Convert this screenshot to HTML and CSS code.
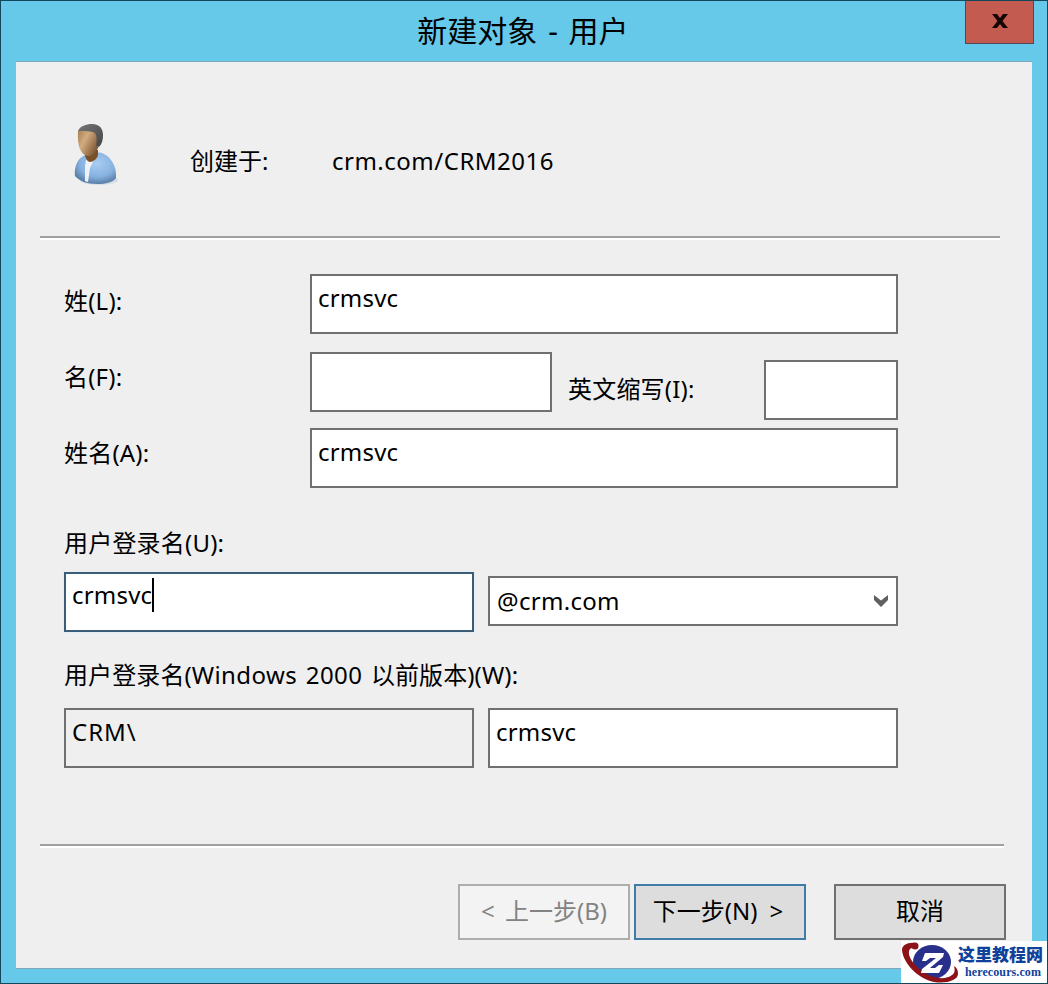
FILE: index.html
```html
<!DOCTYPE html>
<html lang="zh-CN">
<head>
    <meta charset="UTF-8">
    <meta name="viewport" content="width=device-width, initial-scale=1.0">
    <title>新建对象 - 用户</title>
    <link rel="stylesheet" href="styles.css">
</head>
<body>
    <div class="window">
        <div class="titlebar">
            <h1>新建对象 - 用户</h1>
            <button type="button" class="close-btn" aria-label="关闭">
                <svg width="16" height="14" viewBox="0 0 16 14">
                    <path d="M0 0h5l3 4 3-4h5l-5.500 7 5.500 7h-5l-3-4-3 4H0l5.500-7z" fill="#140606"/>
                </svg>
            </button>
        </div>

        <form class="panel">
            <div class="summary">
                <svg class="user-icon" width="48" height="66" viewBox="0 0 48 66">
                    <defs>
                        <linearGradient id="skin" x1="0" y1="0" x2="1" y2="0.600">
                            <stop offset="0" stop-color="#a98058"/>
                            <stop offset="0.400" stop-color="#d2ab80"/>
                            <stop offset="1" stop-color="#7a5430"/>
                        </linearGradient>
                        <linearGradient id="hair" x1="0" y1="0" x2="1" y2="1">
                            <stop offset="0" stop-color="#777"/>
                            <stop offset="1" stop-color="#444"/>
                        </linearGradient>
                        <radialGradient id="shirt" cx="0.550" cy="0.350" r="0.650">
                            <stop offset="0" stop-color="#a9cdf2"/>
                            <stop offset="0.650" stop-color="#86b1df"/>
                            <stop offset="1" stop-color="#5b7fa8"/>
                        </radialGradient>
                    </defs>
                    <ellipse cx="27" cy="58" rx="19" ry="5" fill="#d3dde6"/>
                    <path d="M10 35C5 38 2 46 3 54c4 5 12 8 22 8 9 0 16-2 19-6 1-10-4-20-12-24-5-3-17-1-22 3z" fill="url(#shirt)"/>
                    <path d="M14 38h8l-4 8-2 14-3-1V44z" fill="#eef2f7"/>
                    <path d="M13 28h13v5c-1 4-5 7-8 7-2 0-4-3-5-6z" fill="#7a5026"/>
                    <path d="M6 9h21v14c-2 7-6 11-11 11C9 33 5 25 6 9z" fill="url(#skin)"/>
                    <path d="M6 9C8 4 14 2 20 2c8 0 11 5 11 11 0 5-1 9-4 12l-3-2c1-5 1-9-1-12-4-2-11-2-17-2z" fill="url(#hair)"/>
                </svg>
                <span class="created-in">创建于:</span>
                <span class="path">crm.com/CRM2016</span>
            </div>

            <hr class="rule">

            <div class="fields">
                <div class="row">
                    <label for="lastName">姓(L):</label>
                    <input type="text" id="lastName" value="crmsvc">
                </div>
                <div class="row row-first">
                    <label for="firstName">名(F):</label>
                    <input type="text" id="firstName" class="first-name">
                    <label for="initials" class="initials-label">英文缩写(I):</label>
                    <input type="text" id="initials" class="initials">
                </div>
                <div class="row row-full">
                    <label for="fullName">姓名(A):</label>
                    <input type="text" id="fullName" value="crmsvc">
                </div>

                <label for="logonName" class="logon-label">用户登录名(U):</label>
                <div class="pair">
                    <div class="active-field">
                        <input type="text" id="logonName" value="crmsvc">
                        <span class="caret"></span>
                    </div>
                    <div class="combo">
                        <span>@crm.com</span>
                        <svg width="14" height="12" viewBox="0 0 14 12">
                            <path d="M0 0l7 5.500L14 0v5l-7 7-7-7z" fill="#606060"/>
                        </svg>
                    </div>
                </div>

                <label for="oldLogonName" class="old-label">用户登录名(<span class="wide">Windows 2000 </span>以前版本)(W):</label>
                <div class="pair">
                    <input type="text" class="domain" value="CRM\" readonly>
                    <input type="text" id="oldLogonName" value="crmsvc">
                </div>
            </div>

            <hr class="rule rule-bottom">

            <div class="buttons">
                <button type="button" disabled>&lt; 上一步(B)</button>
                <button type="button" class="next">下一步(N) &gt;</button>
                <button type="button" class="cancel">取消</button>
            </div>
        </form>

        <div class="watermark">
            <svg width="58" height="42" viewBox="0 0 58 42">
                <ellipse cx="31" cy="21" rx="19" ry="17" fill="#29308c"/>
                <path d="M14 2C7 1 1 4 1 9c1 13 16 29 32 32 13 2 24-2 24-8 0-4-1-6-4-8 1 4 1 7-2 9-5 4-13 4-21 1C18 30 7 18 8 11c0-3 2-4 6-5z" fill="#8c1418"/>
                <circle cx="14" cy="5" r="3.500" fill="#8c1418"/>
                <path d="M24 12h19l-1 4-13 11h5l4-3h4l-4 8H20l1-4 14-11h-6l-4 3h-4z" fill="#fff"/>
            </svg>
            <div class="watermark-text">
                <strong>这里教程网</strong>
                <span>herecours.com</span>
            </div>
        </div>
    </div>
</body>
</html>
```
FILE: styles.css
```css
* {
    box-sizing: border-box;
}

body {
    margin: 0;
    font-family: "Noto Sans", "Noto Sans CJK SC", sans-serif;
    font-size: 24px;
    line-height: 32px;
    color: #000;
}

.window {
    position: relative;
    width: 1048px;
    height: 984px;
    padding: 0 15px 15px;
    border: 1px solid #12475c;
    background-color: #66c9ea;
    overflow: hidden;
}

.titlebar {
    position: relative;
    display: flex;
    justify-content: center;
    height: 60px;
}

.titlebar h1 {
    margin: 0;
    padding: 9px 2px 0 0;
    font-size: 30px;
    font-weight: 400;
    line-height: 42px;
    word-spacing: 3px;
}

.close-btn {
    position: absolute;
    top: -1px;
    right: -2px;
    display: flex;
    justify-content: center;
    align-items: center;
    width: 69px;
    height: 44px;
    padding: 0 0 2px;
    border: 1px solid #54465a;
    background-color: #c35b50;
}

.panel {
    height: 908px;
    border-top: 1px solid #7aa6bd;
    border-bottom: 1px solid #7fa9b8;
    background-color: #efefef;
}

.summary {
    display: flex;
    height: 174px;
    padding-left: 56px;
}

.user-icon {
    margin-top: 60px;
}

.created-in {
    width: 142px;
    margin: 83px 0 0 70px;
}

.path {
    margin-top: 83px;
    letter-spacing: 0.5px;
}

.rule {
    height: 4px;
    margin: 0 32px 0 24px;
    border: 0;
    border-top: 2px solid #a0a0a0;
    background-color: #fff;
}

.rule-bottom {
    margin-right: 28px;
}

.fields {
    height: 604px;
    width: 882px;
    padding: 34px 0 0 48px;
}

.row {
    display: flex;
    height: 60px;
    margin-bottom: 16px;
}

.row label {
    width: 246px;
    padding-top: 11px;
    letter-spacing: 0.2px;
}

.row-first {
    margin-bottom: 18px;
    padding-top: 2px;
}

.row-first label,
.row-full label {
    padding-top: 9px;
}

.row input {
    flex: 1;
}

input {
    min-width: 0;
    height: 60px;
    padding: 0 6px 14px;
    border: 2px solid #707070;
    border-radius: 0;
    outline: none;
    background-color: #fff;
    color: #000;
    font: inherit;
    letter-spacing: 0.2px;
}

.row .first-name {
    flex: none;
    width: 242px;
}

.row .initials-label {
    width: 196px;
    margin-left: 16px;
    padding-top: 21px;
}

.row .initials {
    margin: 8px 0 -8px;
}

.logon-label,
.old-label {
    display: block;
}

.logon-label {
    height: 45px;
    margin-top: 39px;
    letter-spacing: 0.2px;
}

.old-label {
    height: 49px;
    margin-top: 27px;
    letter-spacing: 0.1px;
}

.wide {
    letter-spacing: 0.4px;
    word-spacing: 2px;
}

.pair {
    display: grid;
    grid-template-columns: 410px 410px;
    align-items: center;
    gap: 14px;
}

.active-field {
    position: relative;
    display: grid;
}

.active-field input {
    padding-bottom: 15px;
    border-color: #3c5d78;
    box-shadow: 0 0 2px #cfe8f8;
}

.caret {
    position: absolute;
    top: 6px;
    left: 88px;
    width: 2px;
    height: 34px;
    background-color: #000;
}

.combo {
    display: flex;
    justify-content: space-between;
    align-items: center;
    height: 50px;
    margin-bottom: 2px;
    padding: 0 8px 0 7px;
    border: 2px solid #707070;
    background-color: #fff;
    letter-spacing: 0.3px;
}

.domain {
    background-color: #efefef;
    letter-spacing: 1px;
}

.buttons {
    display: flex;
    justify-content: flex-end;
    padding: 36px 26px 0 0;
}

.buttons button {
    width: 172px;
    height: 56px;
    padding: 0 0 2px;
    border: 2px solid #707070;
    background-color: #dddddd;
    color: #000;
    font: inherit;
    word-spacing: 4px;
}

.buttons button:disabled {
    border-color: #adadad;
    background-color: #f3f3f3;
    color: #838383;
}

.buttons .next {
    margin-left: 4px;
    padding-right: 4px;
    border-color: #3f7da6;
    word-spacing: 6px;
}

.buttons .cancel {
    margin-left: 28px;
}

.watermark {
    position: absolute;
    right: -1px;
    bottom: -1px;
    display: flex;
    width: 147px;
    height: 43px;
    background-color: #fff;
}

.watermark-text {
    display: flex;
    flex-direction: column;
    margin-left: -1px;
    color: #10429c;
    white-space: nowrap;
}

.watermark-text strong {
    font-family: "Noto Sans CJK SC", sans-serif;
    font-size: 17px;
    font-weight: 900;
    line-height: 26px;
}

.watermark-text span {
    padding-left: 7px;
    font-family: "Liberation Serif", serif;
    font-size: 12px;
    font-weight: bold;
    line-height: 10px;
    letter-spacing: 0.1px;
}
```
